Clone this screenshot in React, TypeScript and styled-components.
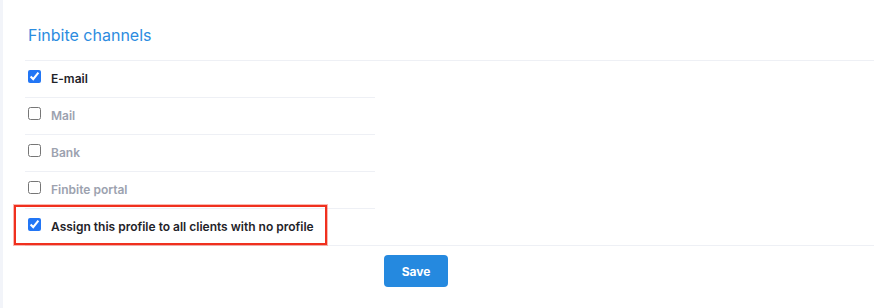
import React from "react";
import styled, { createGlobalStyle } from "styled-components";

const GlobalStyle = createGlobalStyle`
  html, body { margin: 0; padding: 0; background: #ffffff; }
  body { font-family: Inter, "Noto Sans", "Liberation Sans", sans-serif; }
  * { box-sizing: border-box; }
`;

const Page = styled.div`
  display: flex;
  min-height: 308px;
  width: 890px;
  border-left: 3px solid #f2f4f9;
  background: #ffffff;
`;

const Panel = styled.section`
  margin-left: 22px;
  width: 849px;
  display: flex;
  flex-direction: column;
`;

const Header = styled.header`
  padding: 25px 3px 15px;
  border-bottom: 1px solid #eef0f5;
`;

const Title = styled.h2`
  margin: 0;
  font-size: 16px;
  line-height: 20px;
  font-weight: 400;
  color: #2c8ce0;
`;

const List = styled.div`
  width: 350px;
  display: flex;
  flex-direction: column;
`;

const Row = styled.label`
  position: relative;
  display: flex;
  align-items: flex-start;
  gap: 10px;
  padding: 8px 3px 8px;
  border-bottom: 1px solid #eef0f5;
  cursor: pointer;
`;

const Check = styled.input.attrs({ type: "checkbox" })`
  margin: 1px 0 0 0;
  width: 13px;
  height: 13px;
  flex: none;
  accent-color: #2276f5;
`;

const Label = styled.span<{ $active: boolean }>`
  font-size: 12px;
  line-height: 20px;
  font-weight: 600;
  color: ${(p) => (p.$active ? "#1f2329" : "#9ca2af")};
`;

const Highlight = styled.span`
  position: absolute;
  left: -11px;
  top: -4px;
  width: 313px;
  height: 40px;
  border: 2px solid #f0301e;
  outline: 1px solid rgba(240, 48, 30, 0.35);
  pointer-events: none;
`;

const Footer = styled.div`
  padding: 9px 0 0 359px;
`;

const SaveButton = styled.button`
  width: 64px;
  height: 32px;
  border: none;
  border-radius: 4px;
  background: #2589df;
  color: #ffffff;
  font-family: inherit;
  font-size: 12px;
  font-weight: 700;
  cursor: pointer;
`;

const channels = [
  { name: "E-mail", checked: true },
  { name: "Mail", checked: false },
  { name: "Bank", checked: false },
  { name: "Finbite portal", checked: false },
];

export default function App() {
  return (
    <>
      <GlobalStyle />
      <Page>
        <Panel>
          <Header>
            <Title>Finbite channels</Title>
          </Header>
          <List>
            {channels.map((c) => (
              <Row key={c.name}>
                <Check defaultChecked={c.checked} />
                <Label $active={c.checked}>{c.name}</Label>
              </Row>
            ))}
          </List>
          <Row>
            <Highlight />
            <Check defaultChecked />
            <Label $active>Assign this profile to all clients with no profile</Label>
          </Row>
          <Footer>
            <SaveButton>Save</SaveButton>
          </Footer>
        </Panel>
      </Page>
    </>
  );
}
